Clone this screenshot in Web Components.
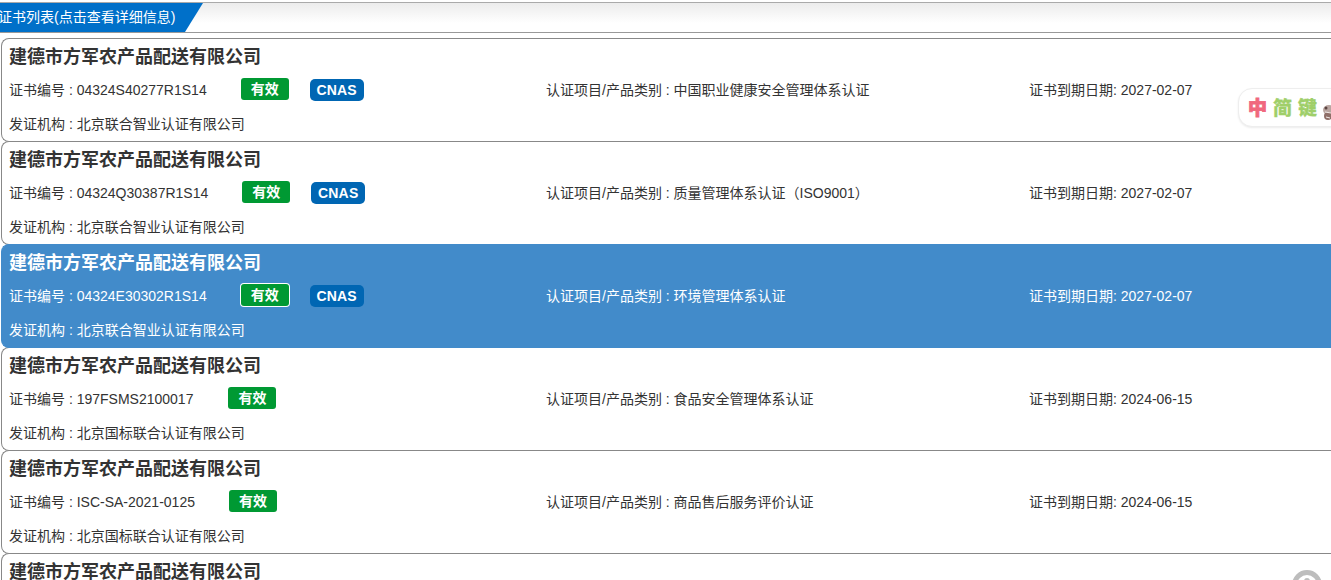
<!DOCTYPE html>
<html lang="zh"><head><meta charset="utf-8"><title>证书列表</title>
<style>
html,body{margin:0;padding:0;background:#fff;height:580px;overflow:hidden}
body{font-family:"Liberation Sans","Noto Sans CJK SC",sans-serif;font-size:14px;color:#333}
</style></head><body>
<cert-page>
<cert-header>证书列表(点击查看详细信息)</cert-header>
<cert-list>
<cert-card number="04324S40277R1S14" project="中国职业健康安全管理体系认证" expiry="2027-02-07" issuer="北京联合智业认证有限公司" gap="34" cnas></cert-card>
<cert-card number="04324Q30387R1S14" project="质量管理体系认证（ISO9001）" expiry="2027-02-07" issuer="北京联合智业认证有限公司" gap="34" cnas></cert-card>
<cert-card number="04324E30302R1S14" project="环境管理体系认证" expiry="2027-02-07" issuer="北京联合智业认证有限公司" gap="34" cnas active></cert-card>
<cert-card number="197FSMS2100017" project="食品安全管理体系认证" expiry="2024-06-15" issuer="北京国标联合认证有限公司" gap="35"></cert-card>
<cert-card number="ISC-SA-2021-0125" project="商品售后服务评价认证" expiry="2024-06-15" issuer="北京国标联合认证有限公司" gap="34"></cert-card>
<cert-card title-only></cert-card>
</cert-list>
<sticker-widget></sticker-widget>
<help-widget></help-widget>
</cert-page>
<script>
const NAME='建德市方军农产品配送有限公司';
function def(tag,css,html){
  customElements.define(tag,class extends HTMLElement{
    connectedCallback(){
      if(this.shadowRoot)return;
      const r=this.attachShadow({mode:'open'});
      r.innerHTML='<style>'+css+'</style>'+(typeof html==='function'?html(this):html);
    }
  });
}
def('cert-page',':host{display:block;position:relative;width:1331px;height:580px;overflow:hidden}','<slot></slot>');
def('cert-header',`
:host{display:block;margin-top:2px;border-top:1px solid #aaa;border-bottom:1px solid #999;height:29px;background:linear-gradient(#ececec,#fff 70%)}
.tab{height:29px;width:203px;background:#0070c9;color:#fff;clip-path:polygon(0 0,100% 0,185px 100%,0 100%);display:flex;align-items:center;font-size:14px;line-height:29px;white-space:nowrap}
.t{margin-left:-2px}`,'<div class="tab"><span class="t"><slot></slot></span></div>');
def('cert-list',':host{display:block;margin-top:5px}','<slot></slot>');
def('cert-badge',`
:host{display:inline-flex;align-items:center;justify-content:center;box-sizing:border-box;height:22px;border-radius:3px;color:#fff;font-weight:bold;font-size:14px;line-height:22px}
:host([kind=ok]){width:48px;background:#009933;margin-bottom:2px}
:host([kind=cnas]){width:54px;background:#0066b3;border-radius:5px;letter-spacing:.2px}
:host([ring]){box-shadow:0 0 0 1px #fff}`,'<slot></slot>');
def('cert-card',`
:host{display:block;box-sizing:border-box;height:104px;margin:0 0 -1px 1px;border:1px solid #888;border-right:0;border-radius:8px 0 0 8px;width:1340px;background:#fff;color:#333;position:relative}
:host([active]){background:#428bca;color:#fff;border-color:#428bca;z-index:1}
.row{height:34px;padding-left:7px;display:flex;align-items:center;white-space:nowrap;line-height:34px}
.title{font-size:18px;font-weight:bold;box-sizing:border-box;padding-top:2px}
.grid{display:grid;grid-template-columns:537px 483px 1fr;padding-left:7px;height:34px;align-items:center;white-space:nowrap}
.grid>div>span,.grid>div.u{margin-bottom:2px}
.first{display:flex;align-items:center}
.first cert-badge+cert-badge{margin-left:21px}
`,h=>{
 const a=h.hasAttribute('active');const g=h.getAttribute('gap');
 if(h.hasAttribute('title-only'))return `<div class="row title">${NAME}</div>`;
 return `<div class="row title">${NAME}</div>
 <div class="grid"><div class="first"><span style="margin-right:${g}px">证书编号 : ${h.getAttribute('number')}</span><cert-badge kind="ok"${a?' ring':''}>有效</cert-badge>${h.hasAttribute('cnas')?'<cert-badge kind="cnas">CNAS</cert-badge>':''}</div>
 <div class="u">认证项目/产品类别 : ${h.getAttribute('project')}</div><div class="u">证书到期日期: ${h.getAttribute('expiry')}</div></div>
 <div class="row">发证机构 : ${h.getAttribute('issuer')}</div>`;
});
def('sticker-widget',`
:host{position:absolute;left:1238px;top:88px;width:110px;height:39px;box-sizing:border-box;background:#fff;border:1px solid #eee;border-radius:14px;box-shadow:0 1px 2px rgba(0,0,0,.08);z-index:3;display:flex;align-items:center;padding:0 0 3px 9px;font:900 19px/1 "Noto Sans CJK SC",sans-serif;letter-spacing:6px;color:#9fcf6a;-webkit-text-stroke:.3px currentColor}
.r{color:#f0687e;-webkit-text-stroke:.8px currentColor}
svg{position:absolute;left:83px;top:13px}`,
`<span class="r">中</span><span>简键</span><svg width="12" height="22" viewBox="0 0 12 22"><ellipse cx="7" cy="8" rx="6" ry="5" fill="#b9a5a0"/><ellipse cx="6" cy="14" rx="4" ry="4" fill="#8f6f68"/><circle cx="4" cy="6" r="1.5" fill="#5a4440"/><path d="M3 10l6 1M4 15l4 1" stroke="#f3ece9" stroke-width="1"/></svg>`);
def('help-widget',':host{position:absolute;left:1292px;top:570px;width:30px;height:30px;z-index:3;display:block}svg{display:block}',
`<svg width="30" height="30" viewBox="0 0 30 30"><circle cx="15" cy="15" r="12.5" fill="#fff" stroke="#bdbdbd" stroke-width="5"/><circle cx="15" cy="11" r="3" fill="#bdbdbd"/></svg>`);
</script>
</body></html>
